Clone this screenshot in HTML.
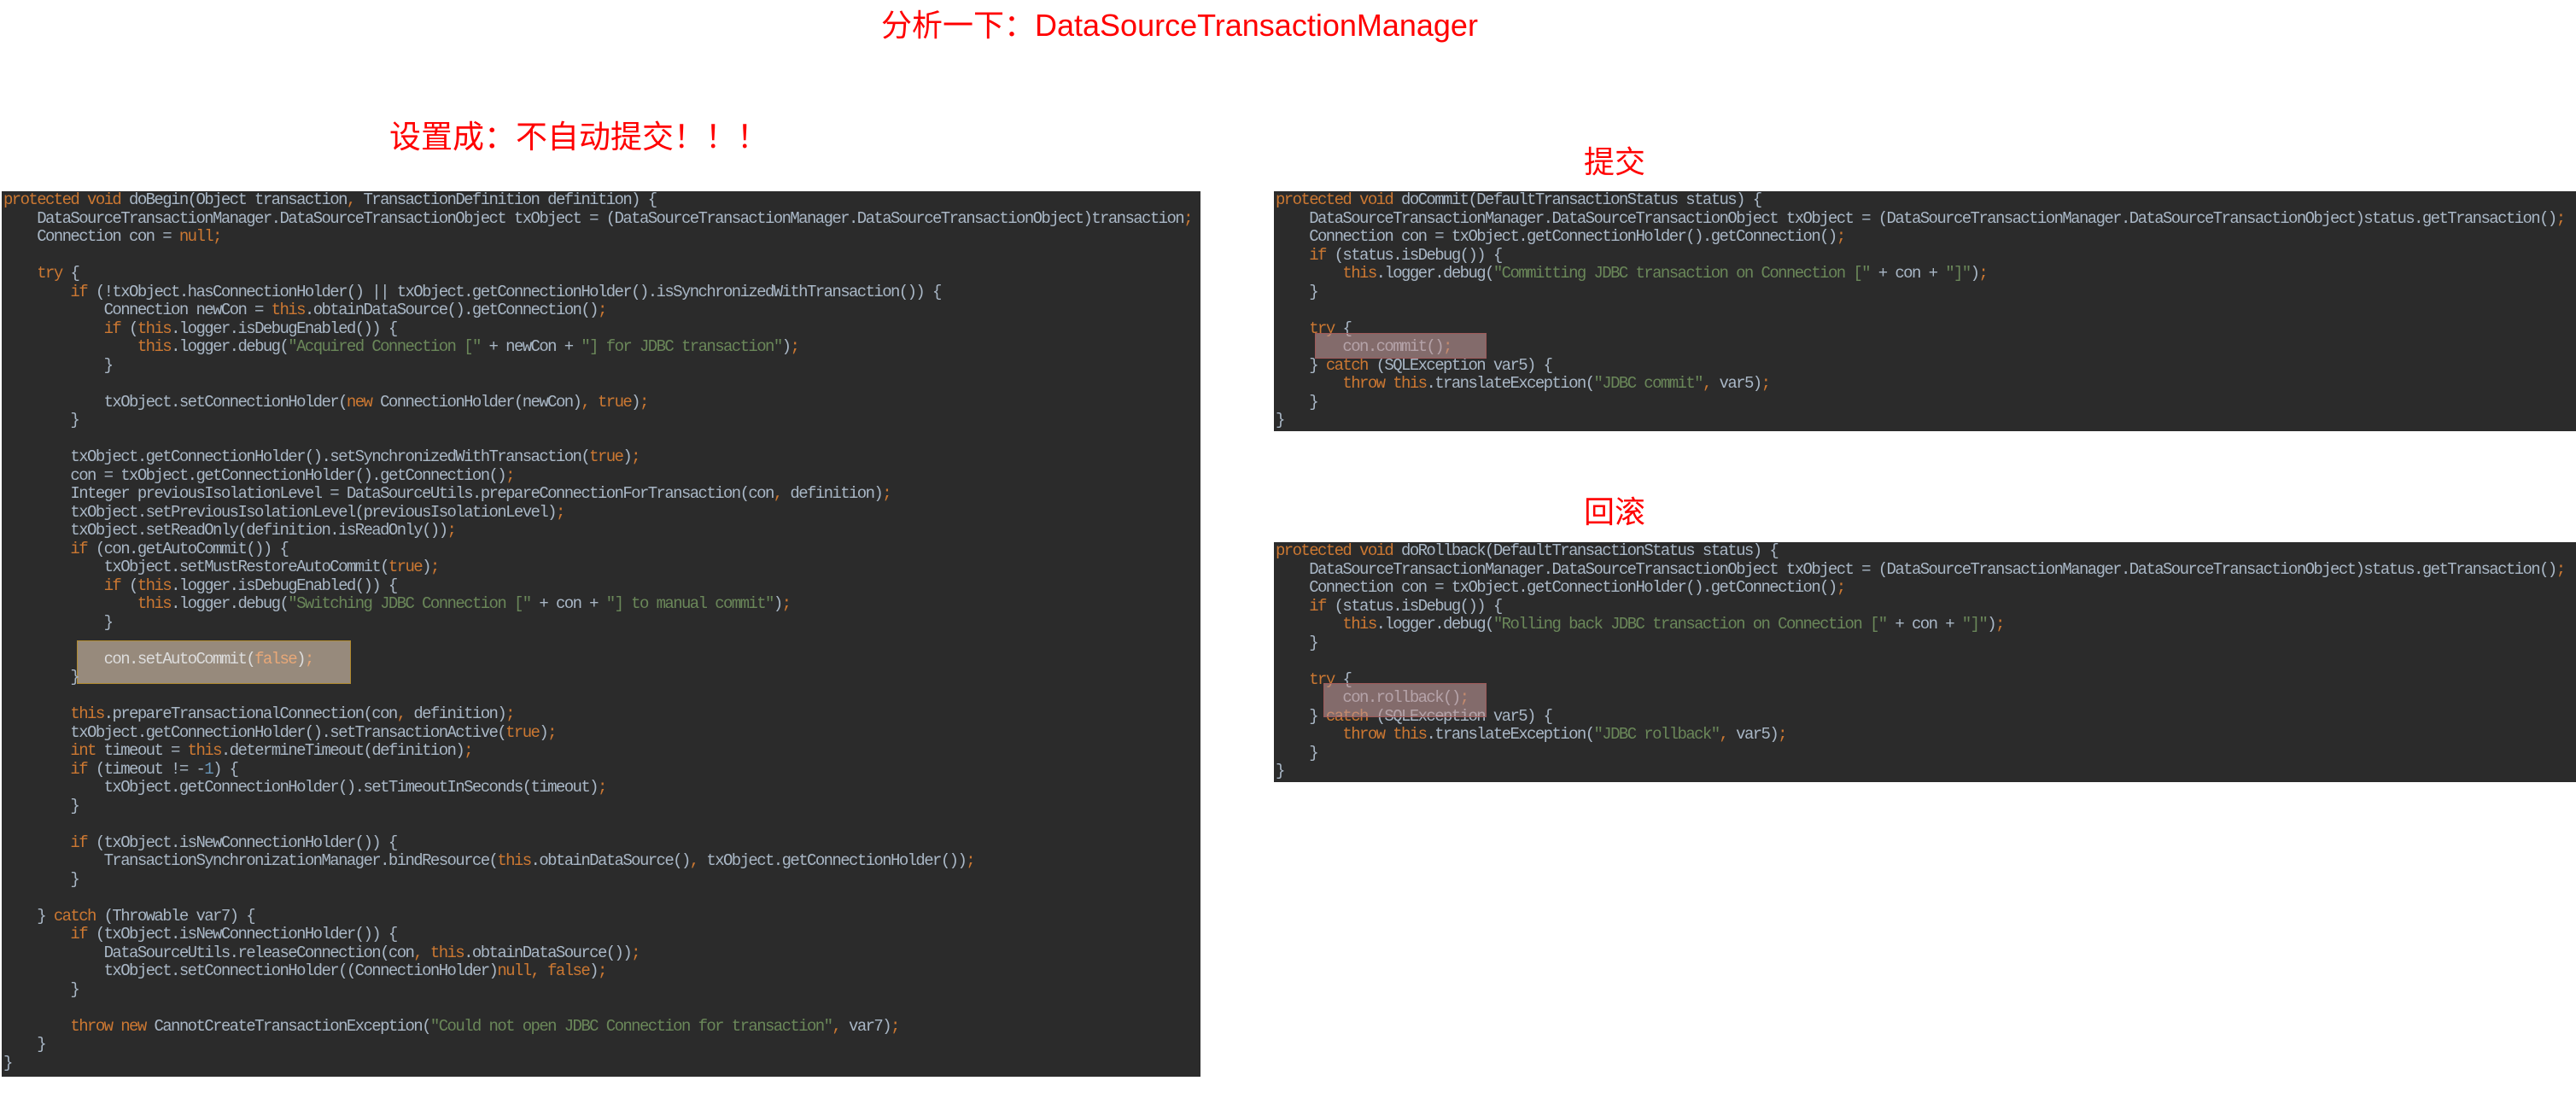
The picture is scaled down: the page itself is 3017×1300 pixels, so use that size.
<!DOCTYPE html>
<html><head><meta charset="utf-8">
<style>
html,body{margin:0;padding:0;background:#fff;width:3017px;height:1300px;overflow:hidden;position:relative}
.t{position:absolute;color:#f00;font-family:"Liberation Sans","Noto Sans CJK SC",sans-serif;white-space:nowrap;line-height:1}
.p{position:absolute;background:#2b2b2b;overflow:hidden}
pre{margin:0;font-family:"Liberation Mono","DejaVu Sans Mono",monospace;font-size:19px;letter-spacing:-1.6px;line-height:21.5px;color:#a9b7c6;position:relative;z-index:2;padding-left:2px}
.k{color:#cc7832}.s{color:#6a8759}
.h{position:absolute;box-sizing:border-box}
</style></head><body>
<div class="t" style="left:1032px;top:12px;font-size:36px">分析一下：DataSourceTransactionManager</div>
<div class="t" style="left:456px;top:142px;font-size:37px;letter-spacing:0px">设置成：不自动提交！！！</div>
<div class="t" style="left:1855px;top:172px;font-size:36px">提交</div>
<div class="t" style="left:1855px;top:582px;font-size:36px">回滚</div>

<div class="p" style="left:2px;top:224px;width:1404px;height:1037px">
<div class="h" style="left:88px;top:526px;width:321px;height:51px;background:#978a7c;border:1px solid #b08a30;z-index:1"></div>
<pre><span class="k">protected void </span>doBegin(Object transaction<span class="k">, </span>TransactionDefinition definition) {
    DataSourceTransactionManager.DataSourceTransactionObject txObject = (DataSourceTransactionManager.DataSourceTransactionObject)transaction<span class="k">;</span>
    Connection con = <span class="k">null;</span>

    <span class="k">try </span>{
        <span class="k">if </span>(!txObject.hasConnectionHolder() || txObject.getConnectionHolder().isSynchronizedWithTransaction()) {
            Connection newCon = <span class="k">this</span>.obtainDataSource().getConnection()<span class="k">;</span>
            <span class="k">if </span>(<span class="k">this</span>.logger.isDebugEnabled()) {
                <span class="k">this</span>.logger.debug(<span class="s">"Acquired Connection ["</span> + newCon + <span class="s">"] for JDBC transaction"</span>)<span class="k">;</span>
            }

            txObject.setConnectionHolder(<span class="k">new </span>ConnectionHolder(newCon)<span class="k">, true</span>)<span class="k">;</span>
        }

        txObject.getConnectionHolder().setSynchronizedWithTransaction(<span class="k">true</span>)<span class="k">;</span>
        con = txObject.getConnectionHolder().getConnection()<span class="k">;</span>
        Integer previousIsolationLevel = DataSourceUtils.prepareConnectionForTransaction(con<span class="k">, </span>definition)<span class="k">;</span>
        txObject.setPreviousIsolationLevel(previousIsolationLevel)<span class="k">;</span>
        txObject.setReadOnly(definition.isReadOnly())<span class="k">;</span>
        <span class="k">if </span>(con.getAutoCommit()) {
            txObject.setMustRestoreAutoCommit(<span class="k">true</span>)<span class="k">;</span>
            <span class="k">if </span>(<span class="k">this</span>.logger.isDebugEnabled()) {
                <span class="k">this</span>.logger.debug(<span class="s">"Switching JDBC Connection ["</span> + con + <span class="s">"] to manual commit"</span>)<span class="k">;</span>
            }

            <span style="color:#ddd">con.setAutoCommit(</span><span style="color:#e8a878">false</span><span style="color:#ddd">)</span><span style="color:#e8a878">;</span>
        }

        <span class="k">this</span>.prepareTransactionalConnection(con<span class="k">, </span>definition)<span class="k">;</span>
        txObject.getConnectionHolder().setTransactionActive(<span class="k">true</span>)<span class="k">;</span>
        <span class="k">int </span>timeout = <span class="k">this</span>.determineTimeout(definition)<span class="k">;</span>
        <span class="k">if </span>(timeout != -<span style="color:#6897bb">1</span>) {
            txObject.getConnectionHolder().setTimeoutInSeconds(timeout)<span class="k">;</span>
        }

        <span class="k">if </span>(txObject.isNewConnectionHolder()) {
            TransactionSynchronizationManager.bindResource(<span class="k">this</span>.obtainDataSource()<span class="k">, </span>txObject.getConnectionHolder())<span class="k">;</span>
        }

    } <span class="k">catch </span>(Throwable var7) {
        <span class="k">if </span>(txObject.isNewConnectionHolder()) {
            DataSourceUtils.releaseConnection(con<span class="k">, this</span>.obtainDataSource())<span class="k">;</span>
            txObject.setConnectionHolder((ConnectionHolder)<span class="k">null, false</span>)<span class="k">;</span>
        }

        <span class="k">throw new </span>CannotCreateTransactionException(<span class="s">"Could not open JDBC Connection for transaction"</span><span class="k">, </span>var7)<span class="k">;</span>
    }
}</pre></div>

<div class="p" style="left:1492px;top:224px;width:1525px;height:281px">
<pre><span class="k">protected void </span>doCommit(DefaultTransactionStatus status) {
    DataSourceTransactionManager.DataSourceTransactionObject txObject = (DataSourceTransactionManager.DataSourceTransactionObject)status.getTransaction()<span class="k">;</span>
    Connection con = txObject.getConnectionHolder().getConnection()<span class="k">;</span>
    <span class="k">if </span>(status.isDebug()) {
        <span class="k">this</span>.logger.debug(<span class="s">"Committing JDBC transaction on Connection ["</span> + con + <span class="s">"]"</span>)<span class="k">;</span>
    }

    <span class="k">try </span>{
        con.commit()<span class="k">;</span>
    } <span class="k">catch </span>(SQLException var5) {
        <span class="k">throw this</span>.translateException(<span class="s">"JDBC commit"</span><span class="k">, </span>var5)<span class="k">;</span>
    }
}</pre>
<div class="h" style="left:48px;top:166px;width:201px;height:30px;background:rgba(190,150,150,.6);border:1px solid #a05a5a;z-index:3"></div>
</div>

<div class="p" style="left:1492px;top:635px;width:1525px;height:281px">
<pre><span class="k">protected void </span>doRollback(DefaultTransactionStatus status) {
    DataSourceTransactionManager.DataSourceTransactionObject txObject = (DataSourceTransactionManager.DataSourceTransactionObject)status.getTransaction()<span class="k">;</span>
    Connection con = txObject.getConnectionHolder().getConnection()<span class="k">;</span>
    <span class="k">if </span>(status.isDebug()) {
        <span class="k">this</span>.logger.debug(<span class="s">"Rolling back JDBC transaction on Connection ["</span> + con + <span class="s">"]"</span>)<span class="k">;</span>
    }

    <span class="k">try </span>{
        con.rollback()<span class="k">;</span>
    } <span class="k">catch </span>(SQLException var5) {
        <span class="k">throw this</span>.translateException(<span class="s">"JDBC rollback"</span><span class="k">, </span>var5)<span class="k">;</span>
    }
}</pre>
<div class="h" style="left:58px;top:165px;width:191px;height:40px;background:rgba(190,150,150,.6);border:1px solid #a05a5a;z-index:3"></div>
</div>
</body></html>
